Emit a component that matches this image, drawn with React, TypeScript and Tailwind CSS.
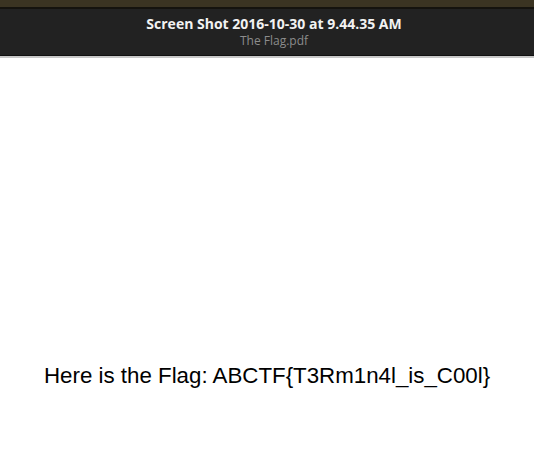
export default function App() {
  return (
    <div className="w-[534px] h-[458px] bg-white flex flex-col overflow-hidden">
      {/* window title bar */}
      <div className="h-[7px] bg-[#3b3422]" />
      <div className="h-[2px] bg-[#15130e]" />
      <div className="h-[46px] bg-[#222222] flex flex-col items-center pt-[5px] pl-[14px] font-['Open_Sans',sans-serif]">
        <div className="text-[14px] leading-[19px] font-bold text-[#f2f2f2]">
          Screen Shot 2016-10-30 at 9.44.35 AM
        </div>
        <div className="text-[12px] leading-[16px] text-[#8c8c8c]">The Flag.pdf</div>
      </div>
      <div className="h-[1px] bg-[#111111]" />
      <div className="h-[2px] bg-[#c8c8c8]" />
      {/* pdf page */}
      <div className="flex-1 bg-white pt-[305px] pl-[44px]">
        <div className="font-['Liberation_Sans',Arial,sans-serif] text-[22.3px] leading-[26px] text-black">
          Here is the Flag: ABCTF{"{"}T3Rm1n4l_is_C00l{"}"}
        </div>
      </div>
    </div>
  );
}
